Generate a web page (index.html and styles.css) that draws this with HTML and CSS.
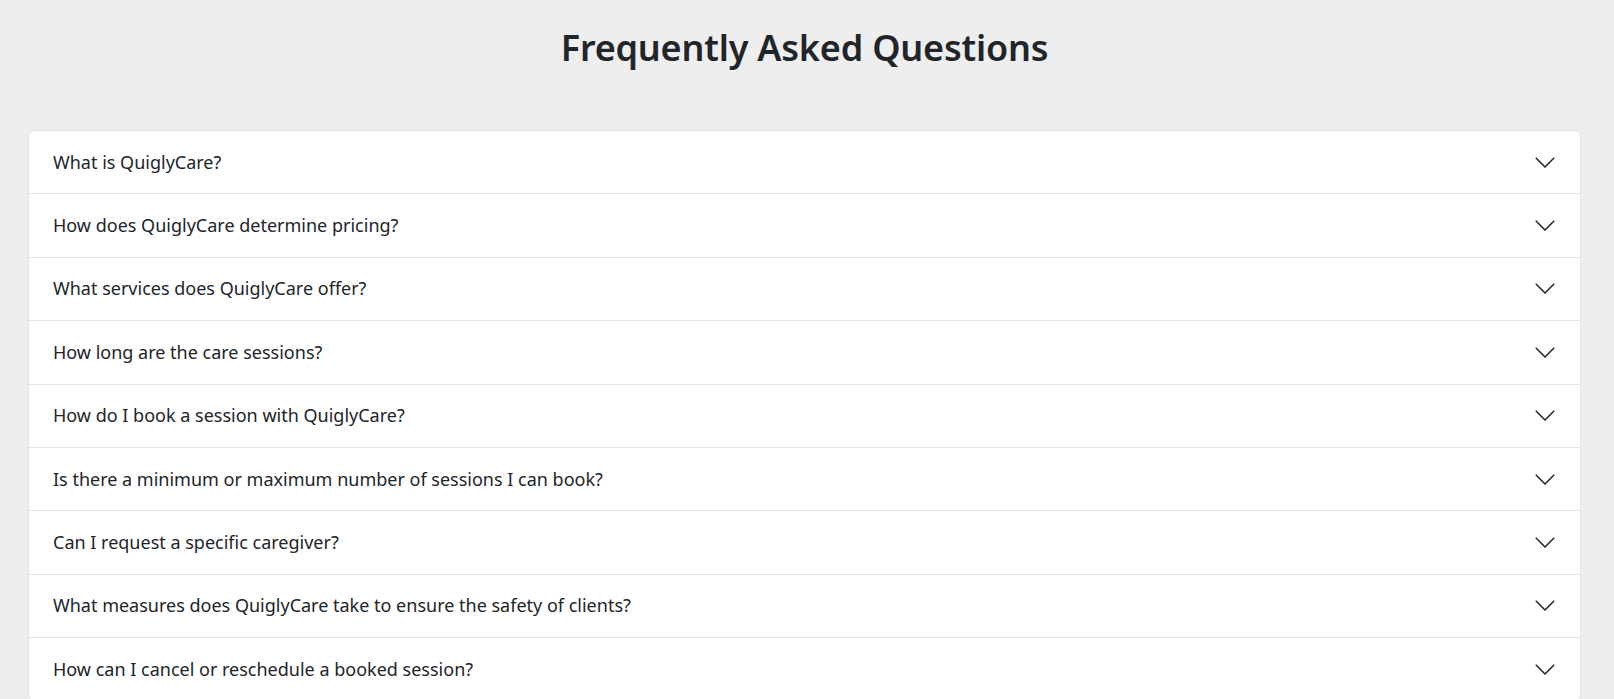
FILE: index.html
```html
<!DOCTYPE html>
<html lang="en">
<head>
<meta charset="utf-8">
<title>Frequently Asked Questions</title>
<link rel="stylesheet" href="styles.css">
</head>
<body>
<main class="page">
  <h1 class="title">Frequently Asked Questions</h1>
  <div class="accordion">
    <div class="item"><button class="question"><span>What is QuiglyCare?</span><svg class="chev" viewBox="0 0 20 11" width="20" height="11"><polyline points="0.8,0.8 10,10 19.2,0.8"/></svg></button></div>
    <div class="item"><button class="question"><span>How does QuiglyCare determine pricing?</span><svg class="chev" viewBox="0 0 20 11" width="20" height="11"><polyline points="0.8,0.8 10,10 19.2,0.8"/></svg></button></div>
    <div class="item"><button class="question"><span>What services does QuiglyCare offer?</span><svg class="chev" viewBox="0 0 20 11" width="20" height="11"><polyline points="0.8,0.8 10,10 19.2,0.8"/></svg></button></div>
    <div class="item"><button class="question"><span>How long are the care sessions?</span><svg class="chev" viewBox="0 0 20 11" width="20" height="11"><polyline points="0.8,0.8 10,10 19.2,0.8"/></svg></button></div>
    <div class="item"><button class="question"><span>How do I book a session with QuiglyCare?</span><svg class="chev" viewBox="0 0 20 11" width="20" height="11"><polyline points="0.8,0.8 10,10 19.2,0.8"/></svg></button></div>
    <div class="item"><button class="question"><span>Is there a minimum or maximum number of sessions I can book?</span><svg class="chev" viewBox="0 0 20 11" width="20" height="11"><polyline points="0.8,0.8 10,10 19.2,0.8"/></svg></button></div>
    <div class="item"><button class="question"><span>Can I request a specific caregiver?</span><svg class="chev" viewBox="0 0 20 11" width="20" height="11"><polyline points="0.8,0.8 10,10 19.2,0.8"/></svg></button></div>
    <div class="item"><button class="question"><span>What measures does QuiglyCare take to ensure the safety of clients?</span><svg class="chev" viewBox="0 0 20 11" width="20" height="11"><polyline points="0.8,0.8 10,10 19.2,0.8"/></svg></button></div>
    <div class="item"><button class="question"><span>How can I cancel or reschedule a booked session?</span><svg class="chev" viewBox="0 0 20 11" width="20" height="11"><polyline points="0.8,0.8 10,10 19.2,0.8"/></svg></button></div>
  </div>
</main>
</body>
</html>
```
FILE: styles.css
```css
* { box-sizing: border-box; }
html, body { margin: 0; padding: 0; }
body {
  background: #eeeeee;
  color: #212529;
  font-family: "Noto Sans", "Open Sans", sans-serif;
}
.page {
  padding: 20px 33px 40px 28px;
}
.title {
  margin: 0 0 54px;
  text-align: center;
  font-size: 36px;
  font-weight: 600;
  line-height: 56px;
  letter-spacing: -0.2px;
  color: #212529;
}
.accordion {
  background: #ffffff;
  border: 1px solid #dee2e6;
  border-radius: 6px;
  overflow: hidden;
}
.item + .item {
  border-top: 1px solid #dee2e6;
}
.question {
  display: flex;
  align-items: center;
  justify-content: space-between;
  width: 100%;
  padding: 17.7px 25px 17.7px 24px;
  border: 0;
  background: transparent;
  font-family: inherit;
  font-size: 18px;
  line-height: 27px;
  color: #212529;
  text-align: left;
  cursor: pointer;
}
.chev {
  flex: none;
  fill: none;
  stroke: #212529;
  stroke-width: 1.5;
}
```
